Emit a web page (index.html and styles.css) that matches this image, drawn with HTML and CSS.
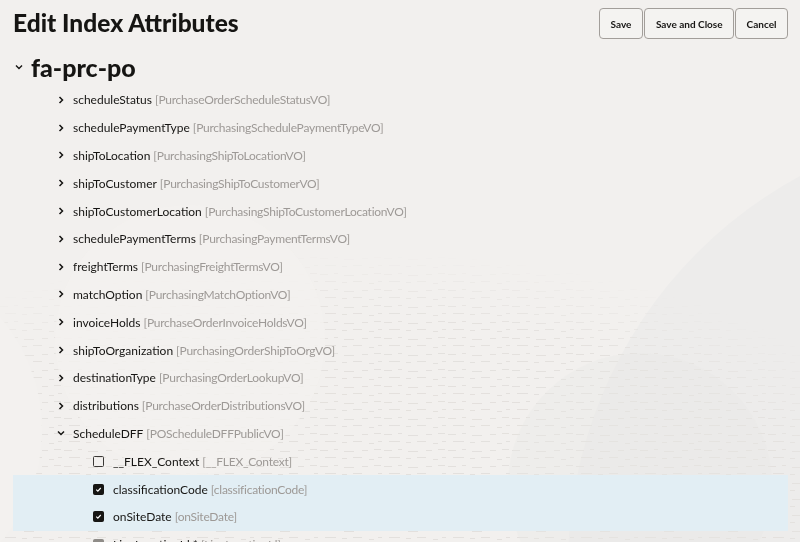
FILE: index.html
```html
<!DOCTYPE html>
<html>
<head>
<meta charset="utf-8">
<link rel="stylesheet" href="styles.css">
</head>
<body>
<svg class="bg" viewBox="0 0 800 542" preserveAspectRatio="none" aria-hidden="true">
  <defs>
    <pattern id="dash" width="64" height="16" patternUnits="userSpaceOnUse">
      <rect x="0" y="2" width="8" height="1" fill="#e2dfdc"/>
      <rect x="14" y="1" width="4" height="1" fill="#e2dfdc"/>
      <rect x="24" y="3" width="10" height="1" fill="#e2dfdc"/>
      <rect x="42" y="2" width="6" height="1" fill="#e2dfdc"/>
      <rect x="54" y="1" width="7" height="1" fill="#e2dfdc"/>
      <rect x="5" y="9" width="11" height="1" fill="#e2dfdc"/>
      <rect x="22" y="10" width="5" height="1" fill="#e2dfdc"/>
      <rect x="33" y="9" width="9" height="1" fill="#e2dfdc"/>
      <rect x="49" y="11" width="5" height="1" fill="#e2dfdc"/>
      <rect x="58" y="9" width="4" height="1" fill="#e2dfdc"/>
    </pattern>
    <radialGradient id="fade" cx="0.42" cy="0.9" r="0.75">
      <stop offset="0" stop-color="#fff" stop-opacity="1"/>
      <stop offset="0.75" stop-color="#fff" stop-opacity="0.9"/>
      <stop offset="1" stop-color="#fff" stop-opacity="0"/>
    </radialGradient>
    <mask id="texmask">
      <rect x="0" y="200" width="800" height="342" fill="url(#fade)"/>
    </mask>
  </defs>
  <rect width="800" height="542" fill="#f2f0ee"/>
  <circle cx="1010" cy="565" r="442" fill="#edeceb"/>
  <rect x="0" y="215" width="800" height="327" fill="url(#dash)" mask="url(#texmask)"/>
  <circle cx="-130" cy="430" r="172" fill="#f3f1ef"/>
  <circle cx="190" cy="340" r="135" fill="#f3f1ef" fill-opacity="0.85"/>
  <circle cx="640" cy="485" r="132" fill="#e9e7e5" fill-opacity="0.35"/>
</svg>
<div class="page">
  <header class="header">
    <h1 class="title">Edit Index Attributes</h1>
    <div class="actions">
      <button class="btn">Save</button>
      <button class="btn">Save and Close</button>
      <button class="btn">Cancel</button>
    </div>
  </header>
  <div class="root">
    <svg class="root-chev" viewBox="0 0 10 10" width="10" height="10"><path d="M2 3.5 L5 6.5 L8 3.5" fill="none" stroke="#161513" stroke-width="1.4"/></svg>
    <span class="root-name">fa-prc-po</span>
  </div>
  <ul class="tree">
    <li class="row"><svg class="chev" viewBox="0 0 10 10"><path d="M3.5 2 L6.5 5 L3.5 8" fill="none" stroke="#161513" stroke-width="1.5"/></svg><span class="name">scheduleStatus</span><span class="type">[PurchaseOrderScheduleStatusVO]</span></li>
    <li class="row"><svg class="chev" viewBox="0 0 10 10"><path d="M3.5 2 L6.5 5 L3.5 8" fill="none" stroke="#161513" stroke-width="1.5"/></svg><span class="name">schedulePaymentType</span><span class="type">[PurchasingSchedulePaymentTypeVO]</span></li>
    <li class="row"><svg class="chev" viewBox="0 0 10 10"><path d="M3.5 2 L6.5 5 L3.5 8" fill="none" stroke="#161513" stroke-width="1.5"/></svg><span class="name">shipToLocation</span><span class="type">[PurchasingShipToLocationVO]</span></li>
    <li class="row"><svg class="chev" viewBox="0 0 10 10"><path d="M3.5 2 L6.5 5 L3.5 8" fill="none" stroke="#161513" stroke-width="1.5"/></svg><span class="name">shipToCustomer</span><span class="type">[PurchasingShipToCustomerVO]</span></li>
    <li class="row"><svg class="chev" viewBox="0 0 10 10"><path d="M3.5 2 L6.5 5 L3.5 8" fill="none" stroke="#161513" stroke-width="1.5"/></svg><span class="name">shipToCustomerLocation</span><span class="type">[PurchasingShipToCustomerLocationVO]</span></li>
    <li class="row"><svg class="chev" viewBox="0 0 10 10"><path d="M3.5 2 L6.5 5 L3.5 8" fill="none" stroke="#161513" stroke-width="1.5"/></svg><span class="name">schedulePaymentTerms</span><span class="type">[PurchasingPaymentTermsVO]</span></li>
    <li class="row"><svg class="chev" viewBox="0 0 10 10"><path d="M3.5 2 L6.5 5 L3.5 8" fill="none" stroke="#161513" stroke-width="1.5"/></svg><span class="name">freightTerms</span><span class="type">[PurchasingFreightTermsVO]</span></li>
    <li class="row"><svg class="chev" viewBox="0 0 10 10"><path d="M3.5 2 L6.5 5 L3.5 8" fill="none" stroke="#161513" stroke-width="1.5"/></svg><span class="name">matchOption</span><span class="type">[PurchasingMatchOptionVO]</span></li>
    <li class="row"><svg class="chev" viewBox="0 0 10 10"><path d="M3.5 2 L6.5 5 L3.5 8" fill="none" stroke="#161513" stroke-width="1.5"/></svg><span class="name">invoiceHolds</span><span class="type">[PurchaseOrderInvoiceHoldsVO]</span></li>
    <li class="row"><svg class="chev" viewBox="0 0 10 10"><path d="M3.5 2 L6.5 5 L3.5 8" fill="none" stroke="#161513" stroke-width="1.5"/></svg><span class="name">shipToOrganization</span><span class="type">[PurchasingOrderShipToOrgVO]</span></li>
    <li class="row"><svg class="chev" viewBox="0 0 10 10"><path d="M3.5 2 L6.5 5 L3.5 8" fill="none" stroke="#161513" stroke-width="1.5"/></svg><span class="name">destinationType</span><span class="type">[PurchasingOrderLookupVO]</span></li>
    <li class="row"><svg class="chev" viewBox="0 0 10 10"><path d="M3.5 2 L6.5 5 L3.5 8" fill="none" stroke="#161513" stroke-width="1.5"/></svg><span class="name">distributions</span><span class="type">[PurchaseOrderDistributionsVO]</span></li>
    <li class="row"><svg class="chev" viewBox="0 0 10 10"><path d="M2 3.5 L5 6.5 L8 3.5" fill="none" stroke="#161513" stroke-width="1.5"/></svg><span class="name">ScheduleDFF</span><span class="type">[POScheduleDFFPublicVO]</span></li>
    <li class="row leaf"><span class="cb"></span><span class="name">__FLEX_Context</span><span class="type">[__FLEX_Context]</span></li>
    <li class="row leaf selected"><span class="cb checked"><svg viewBox="0 0 12 12"><path d="M3 6.2 L5.1 8.2 L9 4" fill="none" stroke="#fff" stroke-width="1.5"/></svg></span><span class="name">classificationCode</span><span class="type">[classificationCode]</span></li>
    <li class="row leaf selected"><span class="cb checked"><svg viewBox="0 0 12 12"><path d="M3 6.2 L5.1 8.2 L9 4" fill="none" stroke="#fff" stroke-width="1.5"/></svg></span><span class="name">onSiteDate</span><span class="type">[onSiteDate]</span></li>
    <li class="row leaf"><span class="cb disabled"></span><span class="name">LineLocationId *</span><span class="type">[LineLocationId]</span></li>
  </ul>
</div>
</body>
</html>
```

FILE: styles.css
```css
html, body {
  margin: 0;
  padding: 0;
  height: 100%;
  overflow: hidden;
}
body {
  font-family: Lato, "Noto Sans", sans-serif;
  color: #161513;
  background: #f2f0ee;
}
.bg {
  position: fixed;
  left: 0;
  top: 0;
  width: 800px;
  height: 542px;
  z-index: -1;
}
.page {
  padding: 0 12px 0 13px;
}
.header {
  display: flex;
  justify-content: space-between;
  align-items: flex-start;
  height: 48px;
}
.title {
  margin: 0;
  padding-top: 7px;
  font-size: 24.5px;
  font-weight: 900;
  line-height: 32px;
}
.actions {
  display: flex;
  padding-top: 8px;
}
.btn {
  height: 31px;
  padding: 0 10.5px;
  margin-left: 1px;
  border: 1px solid #a29e9a;
  border-radius: 4px;
  background: rgba(255, 255, 255, 0.2);
  font-family: Lato, "Noto Sans", sans-serif;
  font-size: 10px;
  font-weight: 700;
  color: #161513;
}
.btn:first-child {
  padding: 0 11px;
}
.root {
  display: flex;
  align-items: center;
  height: 38px;
}
.root-chev {
  margin: 0 7px 0 1px;
}
.root-name {
  font-size: 25px;
  font-weight: 900;
}
.tree {
  list-style: none;
  margin: 0;
  padding: 0;
}
.row {
  display: flex;
  align-items: center;
  height: 27.8px;
  padding-left: 43px;
  font-size: 12px;
  white-space: pre;
}
.chev {
  width: 10px;
  height: 10px;
  margin-right: 7px;
}
.leaf {
  padding-left: 80px;
}
.selected {
  background: #e2eef4;
}
.cb {
  box-sizing: border-box;
  width: 11px;
  height: 11px;
  border: 1.2px solid #3a3836;
  border-radius: 1.5px;
  margin-right: 9px;
  display: flex;
  align-items: center;
  justify-content: center;
}
.cb svg {
  width: 11px;
  height: 11px;
}
.cb.checked {
  background: #161513;
  border-color: #161513;
}
.cb.disabled {
  background: #8f8c88;
  border-color: #8f8c88;
}
.name {
  color: #161513;
}
.type {
  color: #9d9996;
  font-size: 12px;
  letter-spacing: -0.25px;
  margin-left: 3px;
}
```
